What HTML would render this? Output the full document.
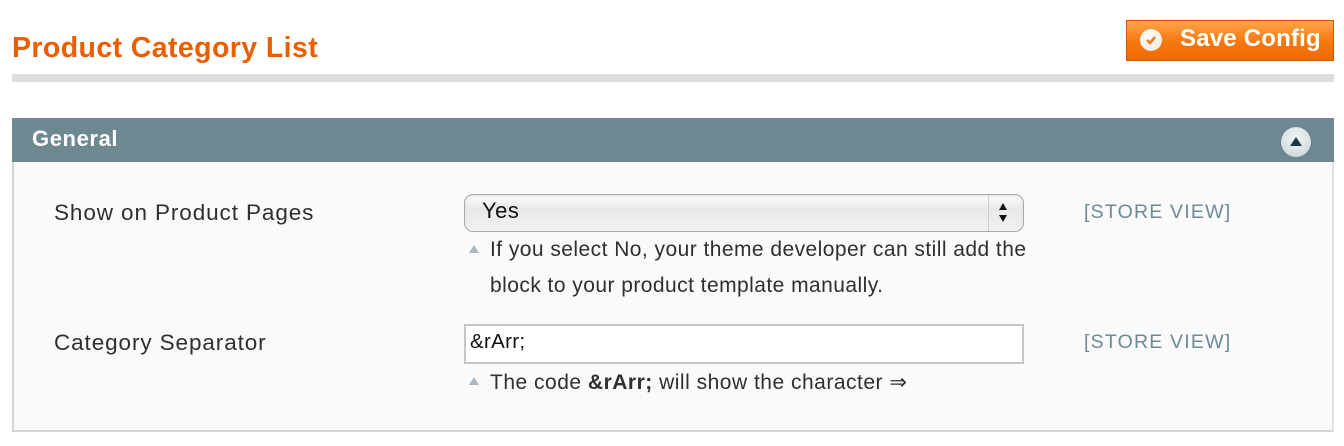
<!DOCTYPE html>
<html><head><style>
body{margin:0;width:1344px;height:446px;background:#fff;font-family:"Liberation Sans",Arial,sans-serif;position:relative;overflow:hidden}
.a{position:absolute}
</style></head><body>
<div class="a" style="left:12px;top:32px;font-size:28.5px;font-weight:bold;color:#eb5e00;letter-spacing:0.4px">Product Category List</div>
<div class="a" style="left:1126px;top:20px;width:206px;height:39px;border:1px solid #d35400;background:linear-gradient(#ffa54a,#f5780e 55%,#ee6a06);"></div>
<div class="a" style="left:1140px;top:29px;width:22px;height:22px;border-radius:50%;background:radial-gradient(circle at 40% 35%,#fff,#f2e2d2);"></div>
<svg class="a" style="left:1143px;top:32px" width="16" height="16"><path d="M4 8 L7 11 L12 5" stroke="#f07a1a" stroke-width="2.6" fill="none"/></svg>
<div class="a" style="left:1180px;top:25px;font-size:24px;font-weight:bold;color:#fff;letter-spacing:0.2px">Save Config</div>
<div class="a" style="left:12px;top:74px;width:1322px;height:8px;background:#dedede"></div>
<div class="a" style="left:12px;top:118px;width:1322px;height:44px;background:#6f8992"></div>
<div class="a" style="left:32px;top:126px;font-size:22px;font-weight:bold;color:#fff;letter-spacing:0.6px">General</div>
<div class="a" style="left:1281px;top:127px;width:30px;height:30px;border-radius:50%;background:radial-gradient(circle at 50% 40%,#f4f8f8,#c4d0d2);box-shadow:0 0 2px #5a6f76"></div>
<svg class="a" style="left:1287px;top:133px" width="18" height="18"><path d="M9 4 L15 13 L3 13 Z" fill="#1e3a4a"/></svg>
<div class="a" style="left:12px;top:162px;width:1318px;height:268px;background:#fafafa;border-left:2px solid #d6d6d6;border-right:2px solid #e4e4e4;border-bottom:2px solid #d6d6d6"></div>
<div class="a" style="left:54px;top:200px;font-size:22.5px;color:#2f2f2f;letter-spacing:0.9px">Show on Product Pages</div>
<div class="a" style="left:464px;top:194px;width:558px;height:36px;border:1px solid #aaa;border-radius:9px;background:linear-gradient(#fdfdfd,#e8e8e8 40%,#f2f2f2);box-shadow:inset 0 1px 2px #ddd"></div>
<div class="a" style="left:988px;top:195px;width:1px;height:36px;background:#ccc"></div>
<div class="a" style="left:482px;top:198px;font-size:22px;color:#111;letter-spacing:0.5px">Yes</div>
<svg class="a" style="left:997px;top:202px" width="12" height="22"><path d="M6 1 L10 8 L2 8Z M2 13 L10 13 L6 20Z" fill="#111"/></svg>
<div class="a" style="left:1084px;top:201px;font-size:19.5px;color:#6e8a96;letter-spacing:1.2px">[STORE VIEW]</div>
<svg class="a" style="left:467px;top:243px" width="14" height="12"><path d="M7 2 L12 10 L2 10Z" fill="#a9b8be"/></svg>
<div class="a" style="left:490px;top:232px;font-size:21px;color:#2f2f2f;line-height:36px;width:600px;letter-spacing:0.45px">If you select No, your theme developer can still add the<br>block to your product template manually.</div>
<div class="a" style="left:54px;top:330px;font-size:22.5px;color:#2f2f2f;letter-spacing:0.9px">Category Separator</div>
<div class="a" style="left:464px;top:324px;width:556px;height:36px;border:2px solid #c6c6c6;background:#fff"></div>
<div class="a" style="left:470px;top:330px;font-size:20.5px;color:#111;letter-spacing:0.3px">&amp;rArr;</div>
<div class="a" style="left:1084px;top:331px;font-size:19.5px;color:#6e8a96;letter-spacing:1.2px">[STORE VIEW]</div>
<svg class="a" style="left:467px;top:375px" width="14" height="12"><path d="M7 2 L12 10 L2 10Z" fill="#a9b8be"/></svg>
<div class="a" style="left:490px;top:370px;font-size:21px;color:#2f2f2f;letter-spacing:0.5px">The code <b>&amp;rArr;</b> will show the character ⇒</div>
</body></html>
